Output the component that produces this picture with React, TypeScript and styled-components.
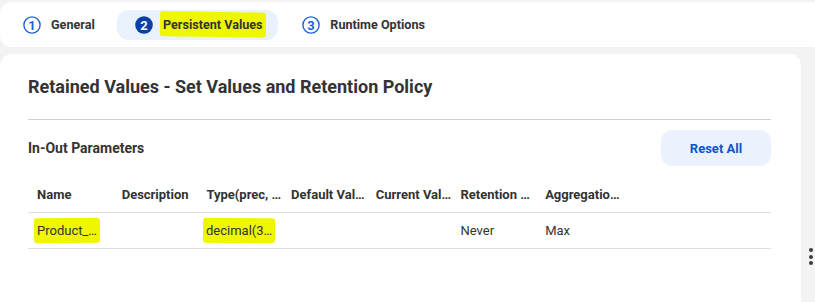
import React from "react";
import styled, { createGlobalStyle } from "styled-components";

const GlobalStyle = createGlobalStyle`
  html, body {
    margin: 0;
    padding: 0;
    background: #f3f3f3;
    font-family: Roboto, "Noto Sans", "Liberation Sans", sans-serif;
    color: #333;
  }
`;

const Page = styled.div`
  width: 815px;
  height: 302px;
  padding-top: 2px;
  box-sizing: border-box;
  overflow: hidden;
`;

//Stepper
const TopBar = styled.div`
  height: 45px;
  background: #fff;
  border-radius: 12px 0 0 12px;
  display: flex;
  align-items: center;
  gap: 6px;
  padding-left: 5px;
`;

const Tab = styled.div<{ $active?: boolean }>`
  height: 30px;
  display: flex;
  align-items: center;
  gap: 10px;
  padding: 0 16px 0 18px;
  border-radius: 12px;
  background: ${(p) => (p.$active ? "#e9f1fd" : "transparent")};
  font-size: 12.6px;
  font-weight: 700;
  color: #333;
`;

const Marker = styled.span<{ $tilt?: number }>`
  display: inline-block;
  background: #eef600;
  border-radius: 3px;
  padding: 5px 3px 5px;
  margin: -2px -3px;
  transform: rotate(${(p) => p.$tilt ?? 0}deg);
  & > span {
    display: inline-block;
    transform: rotate(${(p) => -(p.$tilt ?? 0)}deg);
  }
`;

const StepIcon = ({ n, filled }: { n: number; filled?: boolean }) => (
  <svg width="18" height="18" viewBox="0 0 18 18">
    <circle
      cx="9"
      cy="9"
      r={filled ? 8.8 : 8.1}
      fill={filled ? "#0b3fa8" : "#fff"}
      stroke={filled ? "none" : "#1f5fd6"}
      strokeWidth="1.4"
    />
    <text
      x="9"
      y="13.5"
      textAnchor="middle"
      fontSize="13"
      fontWeight={700}
      fontFamily="Roboto, sans-serif"
      fill={filled ? "#fff" : "#1f5fd6"}
    >
      {n}
    </text>
  </svg>
);

//Card
const Body = styled.div`
  display: flex;
  margin-top: 7px;
`;

const Card = styled.div`
  width: 801px;
  height: 260px;
  flex-shrink: 0;
  background: #fff;
  border-radius: 12px 12px 0 0;
  padding: 0 30px 0 28px;
  box-sizing: border-box;
`;

const Handle = styled.div`
  flex: 1;
  display: flex;
  flex-direction: column;
  align-items: center;
  gap: 2.5px;
  padding-top: 194px;
  padding-left: 5px;
  & > i {
    width: 4px;
    height: 4px;
    border-radius: 50%;
    background: #3c3c3c;
  }
`;

const Title = styled.h2`
  margin: 0;
  padding: 21px 0 20px;
  font-size: 18px;
  line-height: 24px;
  font-weight: 700;
  color: #333;
  border-bottom: 1px solid #cfcfcf;
`;

const SectionRow = styled.div`
  display: flex;
  align-items: center;
  justify-content: space-between;
  margin-top: 10px;
`;

const SectionTitle = styled.h3`
  margin: 0;
  font-size: 14px;
  font-weight: 700;
  color: #333;
`;

const ResetButton = styled.button`
  width: 110px;
  height: 36px;
  border: none;
  border-radius: 11px;
  background: #ecf2fd;
  color: #0b54c9;
  font-family: inherit;
  font-size: 13px;
  font-weight: 700;
  cursor: pointer;
`;

const Table = styled.div`
  margin-top: 11px;
`;

const Row = styled.div<{ $head?: boolean }>`
  display: grid;
  grid-template-columns: repeat(7, 84.7px) 1fr;
  height: 36px;
  box-sizing: border-box;
  align-items: center;
  border-bottom: 1.5px solid #dedede;
  font-size: 13px;
  font-weight: ${(p) => (p.$head ? 700 : 400)};
  color: #333;
`;

const Cell = styled.div`
  padding-left: 9px;
  white-space: nowrap;
  overflow: visible;
`;

const headers = [
  "Name",
  "Description",
  "Type(prec, …",
  "Default Val…",
  "Current Val…",
  "Retention …",
  "Aggregatio…",
];

export default function App() {
  return (
    <Page>
      <GlobalStyle />
      <TopBar>
        <Tab>
          <StepIcon n={1} />
          General
        </Tab>
        <Tab $active>
          <StepIcon n={2} filled />
          <Marker $tilt={0.8}>
            <span>Persistent Values</span>
          </Marker>
        </Tab>
        <Tab>
          <StepIcon n={3} />
          Runtime Options
        </Tab>
      </TopBar>
      <Body>
        <Card>
          <Title>Retained Values - Set Values and Retention Policy</Title>
          <SectionRow>
            <SectionTitle>In-Out Parameters</SectionTitle>
            <ResetButton>Reset All</ResetButton>
          </SectionRow>
          <Table>
            <Row $head>
              {headers.map((h) => (
                <Cell key={h}>{h}</Cell>
              ))}
              <Cell />
            </Row>
            <Row>
              <Cell>
                <Marker $tilt={-0.6}>
                  <span>Product_…</span>
                </Marker>
              </Cell>
              <Cell />
              <Cell>
                <Marker $tilt={0.5}>
                  <span>decimal(3…</span>
                </Marker>
              </Cell>
              <Cell />
              <Cell />
              <Cell>Never</Cell>
              <Cell>Max</Cell>
              <Cell />
            </Row>
          </Table>
        </Card>
        <Handle>
          <i />
          <i />
          <i />
        </Handle>
      </Body>
    </Page>
  );
}
